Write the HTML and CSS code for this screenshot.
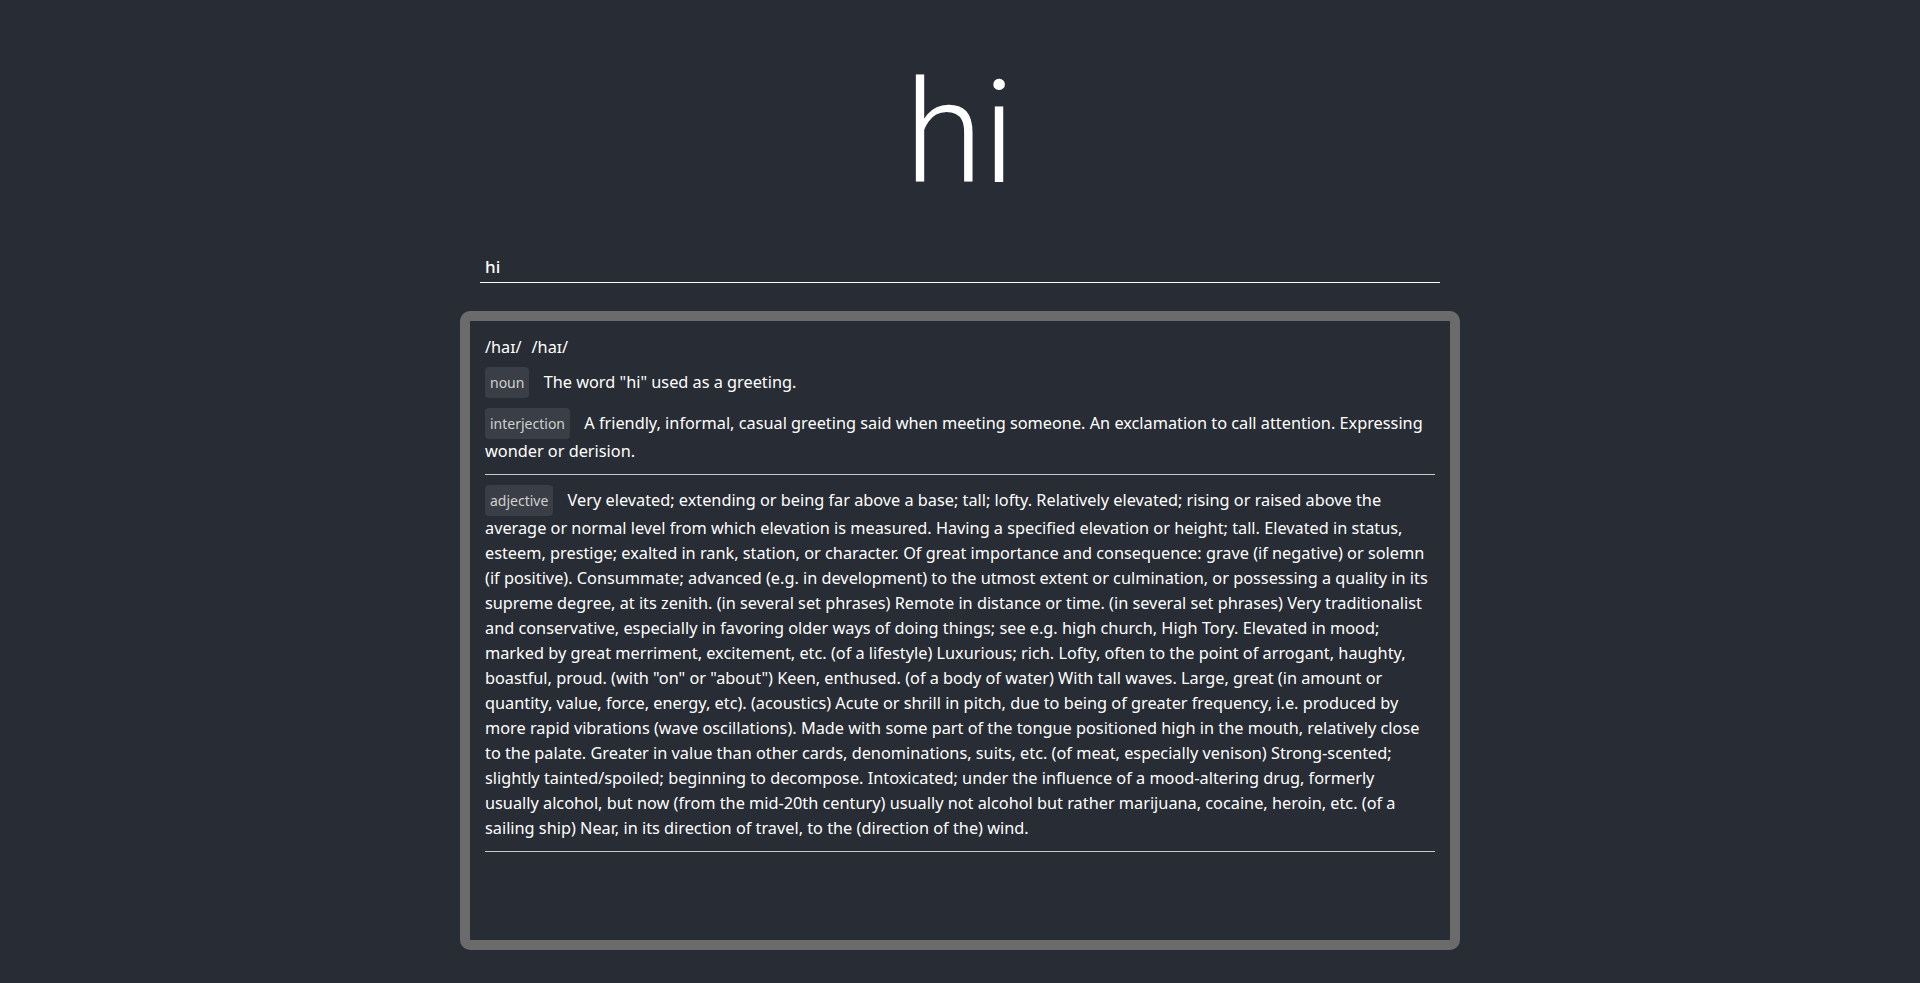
FILE: index.html
```html
<!DOCTYPE html>
<html lang="en">
<head>
<meta charset="utf-8">
<title>hi</title>
<link rel="stylesheet" href="styles.css">
</head>
<body>
<main class="app">
  <h1 class="title">hi</h1>
  <input class="search" type="text" value="hi">
  <section class="result">
    <div class="phonetics"><span class="phonetic">/haɪ/</span><span class="phonetic">/haɪ/</span></div>
    <div class="group">
      <p class="entry"><span class="tag">noun</span> The word "hi" used as a greeting.</p>
      <p class="entry"><span class="tag">interjection</span> A friendly, informal, casual greeting said when meeting someone. An exclamation to call attention. Expressing wonder or derision.</p>
    </div>
    <div class="group">
      <p class="entry"><span class="tag">adjective</span> Very elevated; extending or being far above a base; tall; lofty. Relatively elevated; rising or raised above the average or normal level from which elevation is measured. Having a specified elevation or height; tall. Elevated in status, esteem, prestige; exalted in rank, station, or character. Of great importance and consequence: grave (if negative) or solemn (if positive). Consummate; advanced (e.g. in development) to the utmost extent or culmination, or possessing a quality in its supreme degree, at its zenith. (in several set phrases) Remote in distance or time. (in several set phrases) Very traditionalist and conservative, especially in favoring older ways of doing things; see e.g. high church, High Tory. Elevated in mood; marked by great merriment, excitement, etc. (of a lifestyle) Luxurious; rich. Lofty, often to the point of arrogant, haughty, boastful, proud. (with "on" or "about") Keen, enthused. (of a body of water) With tall waves. Large, great (in amount or quantity, value, force, energy, etc). (acoustics) Acute or shrill in pitch, due to being of greater frequency, i.e. produced by more rapid vibrations (wave oscillations). Made with some part of the tongue positioned high in the mouth, relatively close to the palate. Greater in value than other cards, denominations, suits, etc. (of meat, especially venison) Strong-scented; slightly tainted/spoiled; beginning to decompose. Intoxicated; under the influence of a mood-altering drug, formerly usually alcohol, but now (from the mid-20th century) usually not alcohol but rather marijuana, cocaine, heroin, etc. (of a sailing ship) Near, in its direction of travel, to the (direction of the) wind.</p>
    </div>
  </section>
</main>
</body>
</html>
```
FILE: styles.css
```css
* { box-sizing: border-box; }

html, body {
  margin: 0;
  padding: 0;
  background: #282c34;
  color: #ffffff;
  font-family: "Noto Sans", "Open Sans", sans-serif;
}

.app {
  display: flex;
  flex-direction: column;
  align-items: center;
}

.title {
  margin: 63px 0 0;
  height: 142px;
  font-family: Roboto, "Noto Sans", sans-serif;
  font-weight: 300;
  font-size: 142px;
  line-height: 142px;
  color: #ffffff;
}

.search {
  display: block;
  margin-top: 45px;
  width: 960px;
  height: 33px;
  padding: 0 5px;
  border: none;
  border-bottom: 1px solid #ffffff;
  outline: none;
  background: transparent;
  color: #ffffff;
  font-family: "Noto Sans", "Open Sans", sans-serif;
  font-size: 17px;
  font-weight: 500;
}

.result {
  margin-top: 28px;
  width: 1000px;
  height: 65vh;
  overflow-y: auto;
  padding: 14px 15px;
  border: 10px solid #6b6b6b;
  border-radius: 10px;
  background: #282c34;
}

.phonetics {
  font-size: 16.3px;
  line-height: 24px;
  margin-bottom: 8px;
}

.phonetic {
  margin-right: 10px;
}

.group {
  border-bottom: 1px solid #c8c8c8;
  margin-bottom: 10px;
}

.entry {
  margin: 0 0 10px;
  padding-right: 6px;
  font-size: 16.3px;
  line-height: 25px;
}

.tag {
  display: inline-block;
  margin-right: 10px;
  padding: 6px 5px;
  border-radius: 4px;
  background: #3a3e46;
  color: #d0d0d0;
  font-size: 14px;
  line-height: 19px;
}
```
